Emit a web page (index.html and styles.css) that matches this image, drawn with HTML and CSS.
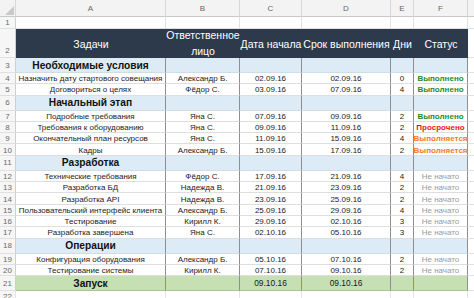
FILE: index.html
```html
<!DOCTYPE html>
<html lang="ru">
<head>
<meta charset="utf-8">
<title>План проекта</title>
<link rel="stylesheet" href="styles.css">
</head>
<body>
<div class="sheet">
  <div class="row colhdr">
    <div class="c rh corner"><svg width="9" height="9" viewBox="0 0 9 9"><polygon points="9,0 9,9 0,9" fill="#c9c9c9"/></svg></div>
    <div class="c a">A</div><div class="c b">B</div><div class="c cc">C</div><div class="c d">D</div><div class="c e">E</div><div class="c f">F</div><div class="c g"></div>
  </div>
  <div class="row r1">
    <div class="c rh">1</div>
    <div class="c a"></div><div class="c b"></div><div class="c cc"></div><div class="c d"></div><div class="c e"></div><div class="c f"></div><div class="c g"></div>
  </div>
  <div class="row head">
    <div class="c rh bottom">2</div>
    <div class="c a">Задачи</div><div class="c b">Ответственное<br>лицо</div><div class="c cc">Дата начала</div><div class="c d">Срок выполнения</div><div class="c e">Дни</div><div class="c f">Статус</div><div class="c g"></div>
  </div>

  <div class="row sec"><div class="c rh">3</div><div class="c a">Необходимые условия</div><div class="c b"></div><div class="c cc"></div><div class="c d"></div><div class="c e"></div><div class="c f"></div><div class="c g"></div></div>
  <div class="row dat"><div class="c rh">4</div><div class="c a">Назначить дату стартового совещания</div><div class="c b">Александр Б.</div><div class="c cc">02.09.16</div><div class="c d">02.09.16</div><div class="c e">0</div><div class="c f st-done">Выполнено</div><div class="c g"></div></div>
  <div class="row dat"><div class="c rh">5</div><div class="c a">Договориться о целях</div><div class="c b">Фёдор С.</div><div class="c cc">03.09.16</div><div class="c d">07.09.16</div><div class="c e">4</div><div class="c f st-done">Выполнено</div><div class="c g"></div></div>

  <div class="row sec"><div class="c rh">6</div><div class="c a">Начальный этап</div><div class="c b"></div><div class="c cc"></div><div class="c d"></div><div class="c e"></div><div class="c f"></div><div class="c g"></div></div>
  <div class="row dat"><div class="c rh">7</div><div class="c a">Подробные требования</div><div class="c b">Яна С.</div><div class="c cc">07.09.16</div><div class="c d">09.09.16</div><div class="c e">2</div><div class="c f st-done">Выполнено</div><div class="c g"></div></div>
  <div class="row dat"><div class="c rh">8</div><div class="c a">Требования к оборудованию</div><div class="c b">Яна С.</div><div class="c cc">09.09.16</div><div class="c d">11.09.16</div><div class="c e">2</div><div class="c f st-late">Просрочено</div><div class="c g"></div></div>
  <div class="row dat"><div class="c rh">9</div><div class="c a">Окончательный план ресурсов</div><div class="c b">Яна С.</div><div class="c cc">11.09.16</div><div class="c d">15.09.16</div><div class="c e">4</div><div class="c f st-prog">Выполняется</div><div class="c g"></div></div>
  <div class="row dat"><div class="c rh">10</div><div class="c a">Кадры</div><div class="c b">Александр Б.</div><div class="c cc">15.09.16</div><div class="c d">17.09.16</div><div class="c e">2</div><div class="c f st-prog">Выполняется</div><div class="c g"></div></div>

  <div class="row sec"><div class="c rh">11</div><div class="c a">Разработка</div><div class="c b"></div><div class="c cc"></div><div class="c d"></div><div class="c e"></div><div class="c f"></div><div class="c g"></div></div>
  <div class="row dat"><div class="c rh">12</div><div class="c a">Технические требования</div><div class="c b">Фёдор С.</div><div class="c cc">17.09.16</div><div class="c d">21.09.16</div><div class="c e">4</div><div class="c f st-none">Не начато</div><div class="c g"></div></div>
  <div class="row dat"><div class="c rh">13</div><div class="c a">Разработка БД</div><div class="c b">Надежда В.</div><div class="c cc">21.09.16</div><div class="c d">23.09.16</div><div class="c e">2</div><div class="c f st-none">Не начато</div><div class="c g"></div></div>
  <div class="row dat"><div class="c rh">14</div><div class="c a">Разработка API</div><div class="c b">Надежда В.</div><div class="c cc">23.09.16</div><div class="c d">25.09.16</div><div class="c e">2</div><div class="c f st-none">Не начато</div><div class="c g"></div></div>
  <div class="row dat"><div class="c rh">15</div><div class="c a">Пользовательский интерфейс клиента</div><div class="c b">Александр Б.</div><div class="c cc">25.09.16</div><div class="c d">29.09.16</div><div class="c e">4</div><div class="c f st-none">Не начато</div><div class="c g"></div></div>
  <div class="row dat"><div class="c rh">16</div><div class="c a">Тестирование</div><div class="c b">Кирилл К.</div><div class="c cc">29.09.16</div><div class="c d">02.10.16</div><div class="c e">3</div><div class="c f st-none">Не начато</div><div class="c g"></div></div>
  <div class="row dat"><div class="c rh">17</div><div class="c a">Разработка завершена</div><div class="c b">Яна С.</div><div class="c cc">02.10.16</div><div class="c d">05.10.16</div><div class="c e">3</div><div class="c f st-none">Не начато</div><div class="c g"></div></div>

  <div class="row sec"><div class="c rh">18</div><div class="c a">Операции</div><div class="c b"></div><div class="c cc"></div><div class="c d"></div><div class="c e"></div><div class="c f"></div><div class="c g"></div></div>
  <div class="row dat"><div class="c rh">19</div><div class="c a">Конфигурация оборудования</div><div class="c b">Александр Б.</div><div class="c cc">05.10.16</div><div class="c d">07.10.16</div><div class="c e">2</div><div class="c f st-none">Не начато</div><div class="c g"></div></div>
  <div class="row dat"><div class="c rh">20</div><div class="c a">Тестирование системы</div><div class="c b">Кирилл К.</div><div class="c cc">07.10.16</div><div class="c d">09.10.16</div><div class="c e">2</div><div class="c f st-none">Не начато</div><div class="c g"></div></div>

  <div class="row sec launch"><div class="c rh">21</div><div class="c a">Запуск</div><div class="c b"></div><div class="c cc">09.10.16</div><div class="c d">09.10.16</div><div class="c e"></div><div class="c f"></div><div class="c g"></div></div>
  <div class="row blank"><div class="c rh">22</div><div class="c a"></div><div class="c b"></div><div class="c cc"></div><div class="c d"></div><div class="c e"></div><div class="c f"></div><div class="c g"></div></div>
</div>
</body>
</html>
```

FILE: styles.css
```css
html, body {
  margin: 0;
  padding: 0;
  background: #ffffff;
  overflow: hidden;
}

.sheet {
  width: 474px;
  height: 298px;
  overflow: hidden;
  font-family: "Liberation Sans", Arial, sans-serif;
  font-size: 8px;
  color: #1a1a1a;
}

.row {
  display: flex;
  height: 11.3px;
}

.c {
  flex: none;
  box-sizing: border-box;
  display: flex;
  align-items: center;
  justify-content: center;
  white-space: nowrap;
  overflow: visible;
  border-bottom: 1px solid #e1e1e1;
  border-right: 1px solid #e1e1e1;
}

.rh { width: 16px; background: #f6f6f6; color: #6a6a6a; font-size: 8px; border-right-color: #cfcfcf; border-bottom-color: #e0e0e0; justify-content: center; }
.a { width: 150px; }
.b { width: 74px; }
.cc { width: 62px; }
.d { width: 89px; }
.e { width: 23px; }
.f { width: 54px; }
.g { flex: 1; border-right: none; }

/* column letters */
.colhdr { height: 17px; }
.colhdr .c {
  background: #f3f3f3;
  color: #666;
  font-size: 8px;
  border-bottom-color: #c9c9c9;
  border-right-color: #d7d7d7;
}
.corner { align-items: flex-end; justify-content: flex-end; padding: 0 1px 1px 0; }

.r1 { height: 12px; }

/* dark header */
.head { height: 29px; }
.head .c:not(.rh):not(.g) {
  background: #2c3a4b;
  color: #ffffff;
  font-size: 10.5px;
  line-height: 16px;
  text-align: center;
  border-right: none;
  border-bottom-color: #2c3a4b;
}
.head .c.a, .head .c.cc, .head .c.d, .head .c.e, .head .c.f { padding-top: 2px; }
.head .rh.bottom { align-items: flex-end; padding-bottom: 2px; }

/* table body borders */
.sec .a, .sec .b, .sec .cc, .sec .d, .sec .e, .sec .f,
.dat .a, .dat .b, .dat .cc, .dat .d, .dat .e, .dat .f {
  border-right: 1px solid #8f8f8f;
}

.dat .a, .dat .b, .dat .cc, .dat .d, .dat .e, .dat .f {
  border-bottom-color: #dedede;
}
.dat .c { padding-top: 1px; }

.sec { height: 15px; }
.sec .a, .sec .b, .sec .cc, .sec .d, .sec .e, .sec .f {
  background: #ddebf7;
  border-bottom-color: #cfdde9;
}
.sec .a { font-weight: bold; font-size: 10.2px; color: #111; }

.launch .a, .launch .b, .launch .cc, .launch .d, .launch .e, .launch .f {
  background: #c6e0b4;
  border-bottom-color: #a9c79a;
}
.launch .cc, .launch .d { font-size: 8.4px; }

.st-done { color: #1e8a2e; font-weight: bold; }
.st-late { color: #e4151b; font-weight: bold; }
.st-prog { color: #f47a28; font-weight: bold; }
.st-none { color: #9a9a9a; }

.blank .c { border-right-color: #e6e6e6; }
```
